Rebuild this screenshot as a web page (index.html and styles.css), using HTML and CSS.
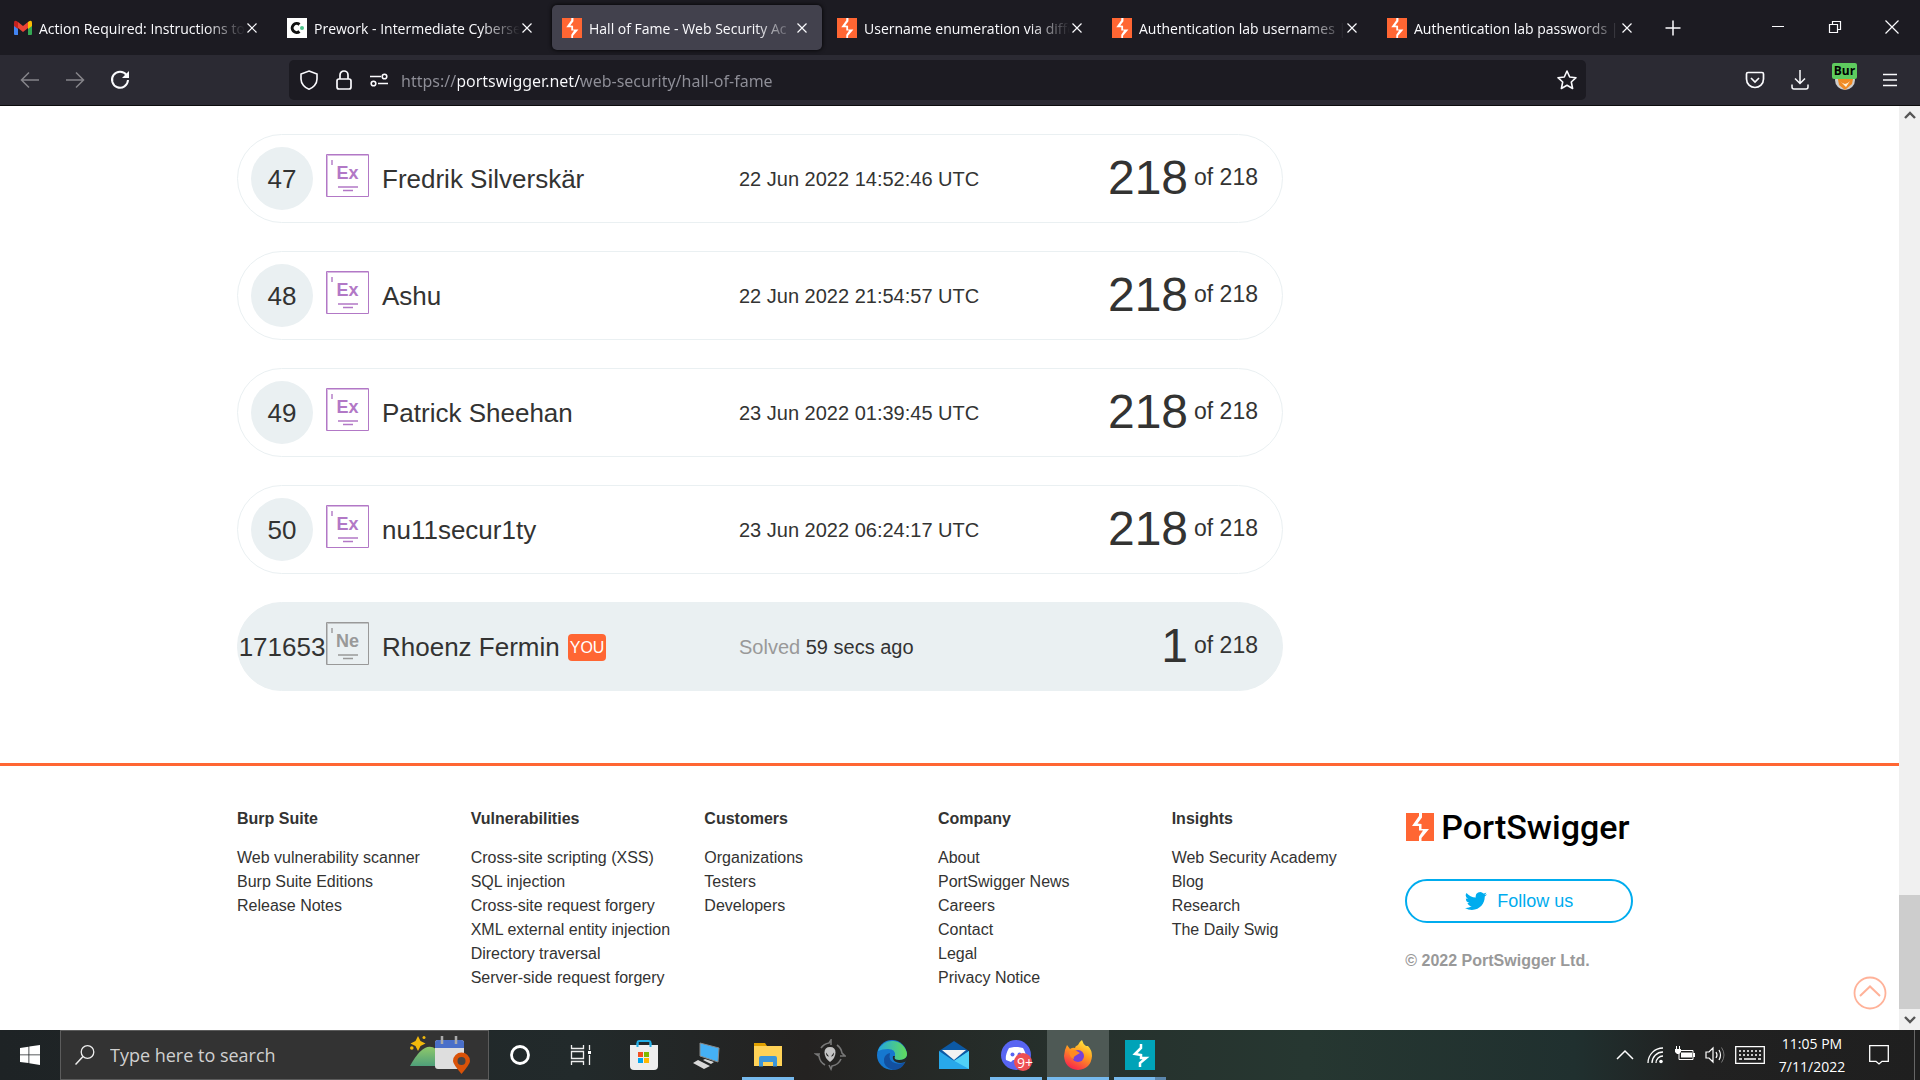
FILE: index.html
```html
<!DOCTYPE html>
<html lang="en">
<head>
<meta charset="utf-8">
<title>Hall of Fame - Web Security Academy</title>
<link rel="stylesheet" href="styles.css">
</head>
<body>
<svg class="defs" aria-hidden="true">
  <symbol id="bolt" viewBox="0 0 28 28"><path fill="#ff6633" d="M0 0h28v28H0z"/><path fill="#fff" d="M13 0h3v4.500L11.500 10.500l4 .5v5h7.500L15.500 25v3H13v-4.500l4-6H13V13H6l7-10z"/></symbol>
  <symbol id="close" viewBox="0 0 10 10"><path d="M.5.500l9 9M9.500.500l-9 9" fill="none" stroke="currentColor" stroke-width="1.200"/></symbol>
  <symbol id="frame" viewBox="0 0 43 43"><path d="M.5.500h42v42H.5z" fill="none" stroke="currentColor"/><path d="M0 1.500h43M1.500 0v43" stroke="currentColor" opacity=".5"/><path d="M6 6v5" stroke="currentColor" stroke-width="2" opacity=".7"/><path d="M12 33h20M17 36.500h10" fill="none" stroke="currentColor" stroke-width="1.700"/></symbol>
</svg>

<header class="browser">
  <div class="tabbar">
    <div class="tab"><svg class="favicon" viewBox="0 0 20 20"><path fill="#4285f4" d="M2 5h4v12H3q-1 0-1-1z"/><path fill="#34a853" d="M16 5h4v11q0 1-1 1h-3z"/><path fill="#fbbc04" d="M16 4q4-3 4 1v3l-4 3z"/><path fill="#c5221f" d="M6 4Q2 1 2 5v3l4 3z"/><path fill="#ea4335" d="M6 4l5 4 5-4v6l-5 4-5-4z"/></svg><button class="tab-title">Action Required: Instructions to</button><button class="tab-close" aria-label="Close tab"><svg><use href="#close"/></svg></button></div>
    <div class="tab"><svg class="favicon" viewBox="0 0 20 20"><path fill="#fff" d="M0 0h20v20H0z"/><path d="M12.500 6.500a4.500 4.500 0 1 0 0 7" fill="none" stroke="#111" stroke-width="3"/><circle cx="15" cy="10" r="2" fill="#4cc38a"/></svg><button class="tab-title">Prework - Intermediate Cyberse</button><button class="tab-close" aria-label="Close tab"><svg><use href="#close"/></svg></button></div>
    <div class="tab active"><svg class="favicon"><use href="#bolt"/></svg><button class="tab-title">Hall of Fame - Web Security Ac</button><button class="tab-close" aria-label="Close tab"><svg><use href="#close"/></svg></button></div>
    <div class="tab"><svg class="favicon"><use href="#bolt"/></svg><button class="tab-title">Username enumeration via diffe</button><button class="tab-close" aria-label="Close tab"><svg><use href="#close"/></svg></button></div>
    <div class="tab"><svg class="favicon"><use href="#bolt"/></svg><button class="tab-title">Authentication lab usernames |</button><button class="tab-close" aria-label="Close tab"><svg><use href="#close"/></svg></button></div>
    <div class="tab"><svg class="favicon"><use href="#bolt"/></svg><button class="tab-title">Authentication lab passwords |</button><button class="tab-close" aria-label="Close tab"><svg><use href="#close"/></svg></button></div>
    <button class="new-tab" aria-label="New tab"><svg width="16" height="16" viewBox="0 0 16 16"><path d="M8 .5v15M.5 8h15" stroke="currentColor" stroke-width="1.500"/></svg></button>
    <div class="window-controls">
      <button aria-label="Minimize"><svg width="14" height="14" viewBox="0 0 14 14"><path d="M1 6.500h12" stroke="currentColor"/></svg></button>
      <button aria-label="Restore"><svg width="14" height="14" viewBox="0 0 14 14"><path d="M1.500 4.500h8v8h-8zM4.500 4V1.500h8v8H10" fill="none" stroke="currentColor" stroke-width="1.200"/></svg></button>
      <button aria-label="Close"><svg width="14" height="14" viewBox="0 0 14 14"><path d="M.5.500l13 13M13.500.500l-13 13" stroke="currentColor" stroke-width="1.200"/></svg></button>
    </div>
  </div>
  <div class="toolbar">
    <div class="nav">
      <button class="dim" aria-label="Back"><svg width="20" height="20" viewBox="0 0 20 20"><path d="M19 10H1.500M9 2.500L1.500 10 9 17.500" fill="none" stroke="currentColor" stroke-width="1.500"/></svg></button>
      <button class="dim" aria-label="Forward"><svg width="20" height="20" viewBox="0 0 20 20"><path d="M1 10h17.500M11 2.500l7.500 7.500-7.500 7.500" fill="none" stroke="currentColor" stroke-width="1.500"/></svg></button>
      <button aria-label="Reload"><svg width="20" height="20" viewBox="0 0 20 20"><path d="M16.500 5A8 8 0 1 0 18 10" fill="none" stroke="currentColor" stroke-width="2"/><path d="M19 1v7h-7z" fill="currentColor"/></svg></button>
    </div>
    <div class="urlbar">
      <svg width="20" height="20" viewBox="0 0 20 20"><path d="M10 1l8 3v5c0 5-4 9-8 10.200C6 18 2 14 2 9V4z" fill="none" stroke="currentColor" stroke-width="1.600"/></svg>
      <svg width="20" height="20" viewBox="0 0 20 20"><rect x="3" y="9" width="14" height="10" rx="2" fill="none" stroke="currentColor" stroke-width="1.700"/><path d="M6 9V5a4 4 0 0 1 8 0v4" fill="none" stroke="currentColor" stroke-width="1.700"/></svg>
      <svg width="20" height="20" viewBox="0 0 20 20"><path d="M1 6.500h11M9 13.500h10" stroke="currentColor" stroke-width="1.600"/><circle cx="15.500" cy="6.500" r="2.300" fill="none" stroke="currentColor" stroke-width="1.600"/><circle cx="4.500" cy="13.500" r="2.300" fill="none" stroke="currentColor" stroke-width="1.600"/></svg>
      <input class="url" type="text" aria-label="Address" value="https://portswigger.net/web-security/hall-of-fame">
      <button aria-label="Bookmark"><svg width="20" height="20" viewBox="0 0 20 20"><path d="M10 1l2.700 6 6.300.7-4.700 4.300 1.300 6.500L10 15.300 4.400 18.500 5.700 12 1 7.700 7.300 7z" fill="none" stroke="currentColor" stroke-width="1.600" stroke-linejoin="round"/></svg></button>
    </div>
    <div class="extras">
      <button aria-label="Pocket"><svg width="20" height="20" viewBox="0 0 20 20"><path d="M3 2.500h14q1.500 0 1.500 1.500v5c0 5-4 8.500-8.500 8.500S1.500 14 1.500 9V4Q1.500 2.500 3 2.500z" fill="none" stroke="currentColor" stroke-width="1.700"/><path d="M6 8l4 4 4-4" fill="none" stroke="currentColor" stroke-width="1.700"/></svg></button>
      <button aria-label="Downloads"><svg width="20" height="20" viewBox="0 0 20 20"><path d="M10 0v13M5 8.500l5 5 5-5M2 14.500V17q0 2 2 2h12q2 0 2-2v-2.500" fill="none" stroke="currentColor" stroke-width="1.500"/></svg></button>
      <button class="proxy" aria-label="Proxy"><svg width="22" height="22" viewBox="0 0 22 22"><circle cx="11" cy="11" r="10" fill="#ccc"/><path d="M3 5l5 2h7l5-2-2 10-7 6-6-5z" fill="#f08a24"/><path d="M6 12q5 6 10 0l-4 6z" fill="#fff0d5"/></svg><span>Bur</span></button>
      <button aria-label="Menu"><svg width="16" height="16" viewBox="0 0 16 16"><path d="M1 2.500h14M1 8h14M1 13.500h14" stroke="currentColor" stroke-width="1.500"/></svg></button>
    </div>
  </div>
</header>

<div class="viewport">
  <main class="page">
    <section class="content">
      <table class="fame">
        <tbody>
          <tr><td class="rank"><span>47</span></td><td class="badge"><svg viewBox="0 0 43 43"><use href="#frame"/></svg><b>Ex</b></td><td class="name">Fredrik Silverskär</td><td class="date">22 Jun 2022 14:52:46 UTC</td><td class="score"><strong>218</strong><span>of 218</span></td></tr>
          <tr><td class="rank"><span>48</span></td><td class="badge"><svg viewBox="0 0 43 43"><use href="#frame"/></svg><b>Ex</b></td><td class="name">Ashu</td><td class="date">22 Jun 2022 21:54:57 UTC</td><td class="score"><strong>218</strong><span>of 218</span></td></tr>
          <tr><td class="rank"><span>49</span></td><td class="badge"><svg viewBox="0 0 43 43"><use href="#frame"/></svg><b>Ex</b></td><td class="name">Patrick Sheehan</td><td class="date">23 Jun 2022 01:39:45 UTC</td><td class="score"><strong>218</strong><span>of 218</span></td></tr>
          <tr><td class="rank"><span>50</span></td><td class="badge"><svg viewBox="0 0 43 43"><use href="#frame"/></svg><b>Ex</b></td><td class="name">nu11secur1ty</td><td class="date">23 Jun 2022 06:24:17 UTC</td><td class="score"><strong>218</strong><span>of 218</span></td></tr>
          <tr class="you"><td class="rank"><span>171653</span></td><td class="badge"><svg viewBox="0 0 43 43"><use href="#frame"/></svg><b>Ne</b></td><td class="name">Rhoenz Fermin<span class="tag">YOU</span></td><td class="date"><span class="muted">Solved</span> 59 secs ago</td><td class="score"><strong>1</strong><span>of 218</span></td></tr>
        </tbody>
      </table>
    </section>
    <footer class="footer">
      <nav><h2>Burp Suite</h2><a href="#">Web vulnerability scanner</a><a href="#">Burp Suite Editions</a><a href="#">Release Notes</a></nav>
      <nav><h2>Vulnerabilities</h2><a href="#">Cross-site scripting (XSS)</a><a href="#">SQL injection</a><a href="#">Cross-site request forgery</a><a href="#">XML external entity injection</a><a href="#">Directory traversal</a><a href="#">Server-side request forgery</a></nav>
      <nav><h2>Customers</h2><a href="#">Organizations</a><a href="#">Testers</a><a href="#">Developers</a></nav>
      <nav><h2>Company</h2><a href="#">About</a><a href="#">PortSwigger News</a><a href="#">Careers</a><a href="#">Contact</a><a href="#">Legal</a><a href="#">Privacy Notice</a></nav>
      <nav><h2>Insights</h2><a href="#">Web Security Academy</a><a href="#">Blog</a><a href="#">Research</a><a href="#">The Daily Swig</a></nav>
      <div class="brand">
        <a class="logo" href="#"><svg width="28" height="28"><use href="#bolt"/></svg><span>PortSwigger</span></a>
        <a class="follow" href="#"><svg width="22" height="22" viewBox="0 0 24 24"><path fill="currentColor" d="M23.950 4.570a10 10 0 0 1-2.820.77 4.960 4.960 0 0 0 2.160-2.720c-.95.550-2 .95-3.130 1.180a4.920 4.920 0 0 0-8.380 4.480C7.690 8.090 4.070 6.130 1.640 3.160a4.900 4.900 0 0 0 1.520 6.570 4.900 4.900 0 0 1-2.230-.61v.06a4.920 4.920 0 0 0 3.950 4.830 5 5 0 0 1-2.210.08 4.940 4.940 0 0 0 4.600 3.420A9.870 9.870 0 0 1 0 19.540a14 14 0 0 0 7.550 2.210c9.050 0 14-7.500 14-13.980 0-.21 0-.42-.02-.63a9.940 9.940 0 0 0 2.460-2.550z"/></svg>Follow us</a>
        <p class="copyright">© 2022 PortSwigger Ltd.</p>
      </div>
    </footer>
    <a class="to-top" href="#" aria-label="Back to top"><svg width="34" height="34" viewBox="0 0 34 34"><circle cx="17" cy="17" r="15.500" fill="none" stroke="currentColor" stroke-width="1.800"/><path d="M7 20l10-9.500L27 20" fill="none" stroke="currentColor" stroke-width="2"/></svg></a>
  </main>
  <div class="scrollbar">
    <svg width="12" height="20" viewBox="0 0 12 20"><path d="M1 12l5-5 5 5" fill="none" stroke="#555" stroke-width="2.400"/></svg>
    <div class="thumb"></div>
    <svg width="12" height="21" viewBox="0 0 12 21"><path d="M1 8l5 5 5-5" fill="none" stroke="#555" stroke-width="2.400"/></svg>
  </div>
</div>

<div class="taskbar">
  <button class="start" aria-label="Start"><svg width="20" height="20" viewBox="0 0 20 20"><path fill="#fff" d="M0 3l8.500-1.200v7.700H0zM9.300 1.600L20 0v9.500H9.300zM0 10.300h8.500V18L0 16.900zM9.300 10.300H20V20L9.300 18.300z"/></svg></button>
  <label class="search">
    <svg width="20" height="20" viewBox="0 0 20 20"><circle cx="12.500" cy="7" r="6.300" fill="none" stroke="#eee" stroke-width="1.300"/><path d="M8 11.500L.5 19.500" stroke="#eee" stroke-width="1.500"/></svg>
    <input type="text" placeholder="Type here to search" aria-label="Search">
    <svg width="60" height="38" viewBox="0 0 60 38"><defs><linearGradient id="hill" x2="0" y2="1"><stop stop-color="#8fc96a"/><stop offset="1" stop-color="#4f9f7a"/></linearGradient></defs><path d="M0 30Q14 4 26 13v17z" fill="url(#hill)"/><path d="M8 0l2.500 5 5 2.500-5 2.500L8 15l-2.500-5-5-2.500 5-2.500z" fill="#f2b90c"/><circle cx="14" cy="1.500" r="1.500" fill="#f2b90c"/><circle cx="1.800" cy="12" r="1.800" fill="#f2b90c"/><rect x="25" y="4" width="29" height="29" rx="3" fill="#dedede"/><path d="M25 12V7q0-3 3-3h23q3 0 3 3v5z" fill="#4a6fc9"/><path d="M32 0v8M46 0v8" stroke="#aaa" stroke-width="2.500"/><path d="M51.500 38Q43 28 43 25a8.500 8.500 0 0 1 17 0q0 3-8.500 13z" fill="#d95208"/><circle cx="51.500" cy="25" r="4" fill="#444"/></svg>
  </label>
  <div class="apps">
    <button aria-label="Cortana"><svg width="32" height="32" viewBox="0 0 32 32"><circle cx="16" cy="16" r="8.500" fill="none" stroke="#fff" stroke-width="2.800"/></svg></button>
    <button aria-label="Task view"><svg width="32" height="32" viewBox="0 0 32 32"><path d="M5.500 6v3.500h12V6M5.500 12.500h12v7h-12zM5.500 26v-3.500h12V26M23.500 6v5M23.500 16v10" fill="none" stroke="#eee" stroke-width="1.300"/><path d="M22 12h3v3h-3z" fill="#fff"/></svg></button>
    <button aria-label="Store"><svg width="32" height="32" viewBox="0 0 32 32"><path d="M9.500 9V4q0-2 2-2h9q2 0 2 2v5" fill="none" stroke="#22aee6" stroke-width="2"/><path d="M2 6h28v21q0 4-4 4H6q-4 0-4-4z" fill="#eee"/><path d="M9.500 4v4M22.500 4v4" stroke="#22aee6" stroke-width="2"/><path fill="#f25022" d="M10 13h5v5h-5z"/><path fill="#7fba00" d="M16 13h5v5h-5z"/><path fill="#00a4ef" d="M10 19h5v5h-5z"/><path fill="#ffb900" d="M16 19h5v5h-5z"/></svg></button>
    <button aria-label="Remote desktop"><svg width="32" height="32" viewBox="0 0 32 32"><path d="M10 4l19 5-1 14-18-6z" fill="#45b0f5" stroke="#888"/><path d="M8 21l12 6-6 3-11-6zM15 20l9 3-3 2-8-4z" fill="#d8d8d8"/></svg></button>
    <button class="open" aria-label="File Explorer"><svg width="32" height="32" viewBox="0 0 32 32"><path d="M2 4h11l2 3v6H2z" fill="#e0a000"/><path d="M2 7h28v20H2z" fill="#ffd257"/><path d="M7 27V19q0-2 2-2h14q2 0 2 2v8.500h-4V23H11v4.500H7z" fill="#3c96da"/></svg></button>
    <button aria-label="Alienware"><svg width="32" height="32" viewBox="0 0 32 32"><path d="M7 9A12 12 0 0 1 15 4l2-3v5M23 6a12 12 0 0 1 5 8l3 3h-5M27 20a12 12 0 0 1-9 7l-1 3-2-4M11 26a12 12 0 0 1-6-9l-3-2h4" fill="none" stroke="#777" stroke-width="1.600"/><path d="M16 8q5.500 0 5.500 5.500T16 23q-5.500-4-5.500-9.500T16 8z" fill="#c4c4c4"/><path d="M12 13.500l3 4q-3 0-3-4zM20 13.500l-3 4q3 0 3-4z" fill="#222"/></svg></button>
    <button aria-label="Edge"><svg width="32" height="32" viewBox="0 0 32 32"><defs><linearGradient id="eg"><stop stop-color="#24a8e0"/><stop offset="1" stop-color="#62dc5a"/></linearGradient></defs><circle cx="16" cy="16" r="15" fill="#1678cf"/><path d="M2 12A15 15 0 0 1 31 15q0 6-8 6-6 0-4-4 1-7-7-7-6 0-10 2z" fill="url(#eg)"/><path d="M14 14q-2 8 5 10 5 2 10-1-3 8-12 8Q7 28 8 20q1-5 6-6z" fill="#1250a0"/><path d="M19 17q-2 4 4 4 6 0 8-4v5l-2 1q-5 2-9 0-4-2-3-6z" fill="#232a29"/></svg></button>
    <button aria-label="Mail"><svg width="32" height="32" viewBox="0 0 32 32"><path d="M1 12L16 2l15 10v18H1z" fill="#0c59a4"/><path d="M4 11h24l-12 10z" fill="#f2f2f2"/><path d="M1 12l15 10 15-10v18H1z" fill="#28a8ea"/><path d="M31 12v18L13 20l3 2z" fill="#50d1f6"/></svg></button>
    <button class="open" aria-label="Discord"><svg width="32" height="32" viewBox="0 0 32 32"><circle cx="16" cy="16" r="15" fill="#5865f2"/><path d="M9 9l5-1h4l5 1q4 7 3 12l-5 2-2-2h-6l-2 2-5-2Q5 16 9 9z" fill="#fff"/><circle cx="12.500" cy="15.500" r="2" fill="#5865f2"/><circle cx="19.500" cy="15.500" r="2" fill="#5865f2"/><circle cx="23" cy="23" r="9" fill="#ed4f54"/></svg><span class="count">9+</span></button>
    <button class="open current" aria-label="Firefox"><svg width="32" height="32" viewBox="0 0 32 32"><defs><linearGradient id="ff" x1=".8" y1="0" x2=".3" y2="1"><stop stop-color="#fff044"/><stop offset=".45" stop-color="#ff9a1f"/><stop offset="1" stop-color="#f8204f"/></linearGradient></defs><path d="M3 11l2-5 3 4q3-2 5-1 0-2 3-3 1-3 4-5 1 4 4 6l2 0q4 4 4 10-1 13-14 14Q3 30 2 17z" fill="url(#ff)"/><circle cx="16" cy="17" r="6" fill="#7541d8"/><path d="M7 13l6-2 5 3-5 3q-2 1-1 3-4-1-5-7z" fill="#ff8a20"/></svg></button>
    <button class="open stacked" aria-label="Burp Suite"><svg width="32" height="32" viewBox="0 0 32 32"><path fill="#00a3b8" d="M1 1h30v30H1z"/><path d="M17 5v4l-6 6 6 1v3h5l-6 5v4" fill="none" stroke="#fff" stroke-width="2.500"/></svg></button>
  </div>
  <div class="tray">
    <button aria-label="Show hidden icons"><svg width="18" height="18" viewBox="0 0 18 18"><path d="M1 13l8-8 8 8" fill="none" stroke="currentColor" stroke-width="1.500"/></svg></button>
    <button aria-label="Network"><svg width="18" height="18" viewBox="0 0 18 18"><path d="M2 17A15 15 0 0 1 17 2M6 17A11 11 0 0 1 17 6M10 17a7 7 0 0 1 7-7" fill="none" stroke="currentColor" stroke-width="1.300"/><circle cx="15" cy="15.500" r="1.800" fill="currentColor"/></svg></button>
    <button aria-label="Battery"><svg width="20" height="18" viewBox="0 0 20 18"><path d="M4 4.500h14v9H4z" fill="none" stroke="currentColor"/><path d="M6 6.500h11v5H6zM18 7h2v4h-2zM0 3h6v3l-2 2H2L0 6zM1 0h1v3H1zM4 0h1v3H4z" fill="currentColor"/></svg></button>
    <button aria-label="Volume"><svg width="20" height="18" viewBox="0 0 20 18"><path d="M1 6h3l4-4v14l-4-4H1zM11 6q2 3 0 6M14 4q3 5 0 10" fill="none" stroke="currentColor" stroke-width="1.200"/><path d="M16.500 1.500q5 7.500 0 15" fill="none" stroke="#777"/></svg></button>
    <button class="keyboard" aria-label="Touch keyboard"><svg width="30" height="18" viewBox="0 0 30 18"><path d="M.7.700h28.600v16.600H.7z" fill="none" stroke="currentColor" stroke-width="1.300"/><path d="M4 5h22M4 9h22" stroke="currentColor" stroke-width="1.500" stroke-dasharray="2 2"/><path d="M4 13h3M9 13h12M23 13h3" stroke="currentColor" stroke-width="1.300"/></svg></button>
    <div class="clock"><time>11:05 PM</time><time>7/11/2022</time></div>
    <button class="notes" aria-label="Notifications"><svg width="20" height="20" viewBox="0 0 20 20"><path d="M.7.700h18.600v15.600H13L10 19l-3-2.700H.7z" fill="none" stroke="currentColor" stroke-width="1.300"/></svg></button>
    <button class="desktop" aria-label="Show desktop"></button>
  </div>
</div>
</body>
</html>
```
FILE: styles.css
```css
* { box-sizing: border-box; }

body {
  margin: 0;
  min-height: 100vh;
  display: flex;
  flex-direction: column;
  background: #fff;
  color: #333332;
  font-family: "Liberation Sans", Arial, sans-serif;
}

button {
  display: flex;
  align-items: center;
  justify-content: center;
  padding: 0;
  border: 0;
  background: none;
  color: inherit;
  font: inherit;
}

a { color: inherit; text-decoration: none; }
svg { display: block; flex: none; }
.defs { position: absolute; width: 0; height: 0; }

/* Browser chrome */
.browser {
  color: #fbfbfe;
  font-family: "Open Sans", "Noto Sans", sans-serif;
  background: #1c1b22;
}

.tabbar {
  display: flex;
  gap: 5px;
  height: 55px;
  padding: 5px 0 5px 2px;
}

.tab {
  display: flex;
  align-items: center;
  flex: 0 1 270px;
  min-width: 0;
  height: 45px;
  padding: 0 13px 0 10px;
  border-radius: 5px;
}

.tab.active {
  background: #42414d;
  box-shadow: 0 0 4px #000;
}

.favicon { width: 20px; height: 20px; margin-right: 7px; }

.tab-title {
  flex: 1;
  min-width: 0;
  display: block;
  overflow: hidden;
  padding-top: 2px;
  text-align: left;
  white-space: nowrap;
  font-size: 14px;
  line-height: 24px;
  -webkit-mask-image: linear-gradient(to left, transparent, #000 40px);
  mask-image: linear-gradient(to left, transparent, #000 40px);
}

.tab-close { width: 14px; }
.tab-close svg { width: 10px; height: 10px; }
.new-tab { width: 42px; }

.window-controls { display: flex; margin-left: auto; }
.window-controls button { width: 57px; height: 44px; }

.toolbar {
  display: flex;
  align-items: center;
  height: 51px;
  background: #2b2a33;
  border-bottom: 1px solid #0c0c0d;
}

.nav { display: flex; width: 289px; padding-left: 7px; }
.nav button { width: 45px; height: 40px; }
.nav .dim { color: #85848a; }

.urlbar {
  display: flex;
  flex: 1;
  align-items: center;
  gap: 15px;
  height: 40px;
  padding: 0 9px 0 10px;
  border-radius: 5px;
  background: #1c1b22;
}

.url {
  flex: 1;
  min-width: 0;
  height: 32px;
  margin-left: -3px;
  padding: 2px 0 0;
  border: 0;
  outline: 0;
  font: 16px/24px "Noto Sans", "Open Sans", sans-serif;
  color: transparent;
  background: linear-gradient(to right, #8f8f98 57px, #fbfbfe 57px 180px, #8f8f98 180px);
  -webkit-background-clip: text;
  background-clip: text;
}

.extras { display: flex; padding-left: 146px; padding-right: 8px; }
.extras button { position: relative; width: 45px; height: 40px; }

.proxy span {
  position: absolute;
  top: 3px;
  left: 10px;
  width: 25px;
  border-radius: 2px;
  background: #5ecb5e;
  color: #000;
  font-size: 12px;
  font-weight: 700;
  line-height: 16px;
}

/* Page */
.viewport { display: flex; flex: 1; }
.page { position: relative; flex: 1; min-width: 0; }
.content { padding: 28px 237px 72px; }

.fame { display: block; max-width: 1046px; }
.fame tbody { display: flex; flex-direction: column; gap: 28px; }

.fame tr {
  display: grid;
  grid-template-columns: 62px 43px 1fr 240px 266px;
  column-gap: 13px;
  align-items: center;
  height: 89px;
  padding: 0 24px 0 13px;
  border: 1px solid #eaf0f2;
  border-radius: 45px;
  font-size: 26px;
}

.fame td { padding: 0; white-space: nowrap; }
.fame .name, .fame .date, .fame .rank { padding-top: 2px; }

.fame .rank {
  display: flex;
  align-items: center;
  justify-content: center;
  height: 63px;
  border-radius: 50%;
  background: #eaf0f2;
}

.fame .badge {
  display: grid;
  height: 43px;
  margin-bottom: 6px;
  color: #b278c6;
}

.badge svg, .badge b { grid-area: 1 / 1; }
.badge b { text-align: center; font-size: 18px; line-height: 38px; }

.fame .date { font-size: 20px; }
.muted { color: #999; }

.fame .score {
  display: flex;
  align-items: center;
  justify-content: flex-end;
  gap: 6px;
  padding-bottom: 2px;
  font-size: 23px;
}

.score strong { font-size: 48px; font-weight: 400; line-height: 56px; }

.fame .you, .fame .you .rank { background: #eaf0f2; }
.fame .you .badge { color: #999; }
.fame .you .name { display: flex; align-items: center; gap: 8px; }

.tag {
  padding: 0 2px;
  border-radius: 4px;
  background: #ff6633;
  color: #fff;
  font-size: 16px;
  line-height: 27px;
}

.footer {
  display: grid;
  grid-template-columns: repeat(6, minmax(0, 1fr));
  gap: 6px;
  min-height: 267px;
  padding: 41px 266px 0 237px;
  border-top: 3px solid #ff6633;
  font-size: 16px;
  line-height: 24px;
}

.footer h2 { margin: 0 0 15px; font-size: 16px; line-height: 24px; }
.footer nav a { display: block; white-space: nowrap; }

.logo { display: flex; align-items: center; gap: 7px; height: 40px; padding-left: 1px; color: #000; }
.logo span { font: 500 34px/40px Roboto, sans-serif; }

.follow {
  display: flex;
  align-items: center;
  justify-content: center;
  gap: 10px;
  height: 44px;
  margin-top: 32px;
  border: 2px solid #00acee;
  border-radius: 22px;
  color: #00acee;
  font-size: 18px;
}

.copyright { margin: 26px 0 0; color: #999; font-weight: 700; }

.to-top { position: absolute; right: 12px; bottom: 20px; color: #ffb299; }

.scrollbar {
  display: flex;
  flex-direction: column;
  align-items: center;
  width: 21px;
  background: #f0f0f0;
}

.thumb { width: 100%; height: 114px; margin-top: auto; background: #cdcdcd; }

/* Taskbar */
.taskbar {
  display: flex;
  height: 50px;
  color: #fff;
  font-family: "Open Sans", "Noto Sans", sans-serif;
  background: linear-gradient(to right, #1e2325, #222a2b 30%, #242221 42%, #26302c 55%, #263731 68%, #20302f 82%, #212121 88%, #1f1f1f);
}

.start { width: 60px; }

.search {
  display: flex;
  align-items: center;
  width: 429px;
  padding: 0 18px 0 14px;
  border: 1px solid #5c5c5c;
  background: #333;
}

.search input {
  flex: 1;
  min-width: 0;
  margin-left: 15px;
  padding: 0;
  border: 0;
  outline: 0;
  background: none;
  color: #fff;
  font: 18px/24px "Open Sans", "Noto Sans", sans-serif;
}

.search input::placeholder { color: #d0d0d0; opacity: 1; }

.apps { display: flex; }

.apps button {
  position: relative;
  width: 62px;
  border: solid transparent;
  border-width: 0 5px;
}

.apps .open::after {
  content: "";
  position: absolute;
  left: 0;
  right: 0;
  bottom: 0;
  height: 3px;
  background: #76b9ed;
}

.apps .current { border-width: 0; background: #4e5955; }
.apps .stacked::after { background: linear-gradient(to right, #76b9ed 41px, #5b87ad 41px); }

.count {
  position: absolute;
  right: 8px;
  bottom: 8px;
  width: 18px;
  font-size: 14px;
  line-height: 18px;
}

.tray { display: flex; margin-left: auto; }
.tray button { width: 30px; }
.tray .keyboard { width: 40px; }

.clock {
  display: flex;
  flex-direction: column;
  align-items: center;
  justify-content: center;
  width: 84px;
  font-size: 14px;
  line-height: 23px;
}

.tray .notes { width: 50px; margin-right: 10px; }
.tray .desktop { width: 6px; border-left: 1px solid #666; }
```
